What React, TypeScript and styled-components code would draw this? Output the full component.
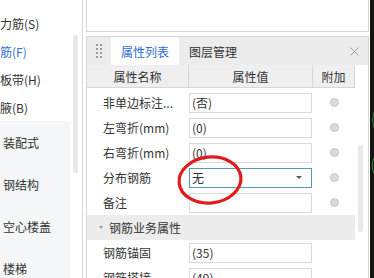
import styled, { createGlobalStyle } from "styled-components";

const Global = createGlobalStyle`
  html, body { margin: 0; padding: 0; background: #fff; }
  body {
    font-family: "Noto Sans CJK SC", "Noto Sans", sans-serif;
    font-size: 12px;
    color: #333;
  }
`;

const Screen = styled.div`
  position: relative;
  width: 374px;
  height: 278px;
  overflow: hidden;
  display: flex;
  background: #fff;
`;

/* ---- left menu ---- */
const LeftNav = styled.div`
  width: 82px;
  border-right: 1px solid #d8d8d8;
  display: flex;
  flex-shrink: 0;
`;

const NavList = styled.div`
  width: 70px;
  display: flex;
  flex-direction: column;
`;

const NavTop = styled.div`
  padding-top: 9px;
  display: flex;
  flex-direction: column;
  flex-shrink: 0;
`;

const NavItem = styled.div<{ $active?: boolean }>`
  height: 28px;
  flex-shrink: 0;
  display: flex;
  align-items: center;
  white-space: nowrap;
  color: ${(p) => (p.$active ? "#2e6fd2" : "#333")};
`;

const NavGroup = styled.div`
  flex: 1;
  background: #f5f6f8;
  display: flex;
  flex-direction: column;
`;

const GroupItem = styled.div`
  height: 42px;
  flex-shrink: 0;
  display: flex;
  align-items: center;
  padding-left: 3px;
  white-space: nowrap;
`;

const NavScroll = styled.div`
  flex: 1;
  display: flex;
  padding-left: 3px;
`;

const Thumb = styled.div<{ $top: number; $h: number }>`
  width: 5px;
  height: ${(p) => p.$h}px;
  margin-top: ${(p) => p.$top}px;
  border-radius: 3px;
  background: #e8e8e8;
`;

/* ---- right column ---- */
const Main = styled.div`
  width: 283px;
  margin-left: 3px;
  display: flex;
  flex-direction: column;
  flex-shrink: 0;
`;

const TopBox = styled.div`
  height: 32px;
  flex-shrink: 0;
  box-sizing: border-box;
  border: 1px solid #d6d6d6;
  border-top: none;
  margin-bottom: 4px;
`;

const Panel = styled.div`
  flex: 1;
  border: 1px solid #d6d6d6;
  border-bottom: none;
  display: flex;
  flex-direction: column;
  min-height: 0;
  overflow: hidden;
`;

const TabBar = styled.div`
  height: 28px;
  flex-shrink: 0;
  background: #ececec;
  display: flex;
  align-items: stretch;
`;

const Grip = styled.div`
  width: 24px;
  display: flex;
  align-items: center;
  justify-content: center;
`;

const Tab = styled.div<{ $active?: boolean }>`
  width: 68px;
  display: flex;
  align-items: center;
  justify-content: center;
  background: ${(p) => (p.$active ? "#fff" : "transparent")};
  color: ${(p) => (p.$active ? "#2e6fd2" : "#333")};
`;

const Close = styled.div`
  margin-left: auto;
  width: 28px;
  display: flex;
  align-items: center;
  justify-content: center;
`;

const Table = styled.div`
  flex: 1;
  display: flex;
  align-items: flex-start;
`;

const TableMain = styled.div`
  width: 268px;
  display: flex;
  flex-direction: column;
`;

const cols = "102px 124px 42px";

const HeadRow = styled.div`
  display: grid;
  grid-template-columns: ${cols};
  height: 22px;
  flex-shrink: 0;
  border-bottom: 1px solid #d6d6d6;
  background: #efefef;
`;

const HeadCell = styled.div`
  border-right: 1px solid #d6d6d6;
  display: flex;
  align-items: center;
  justify-content: center;
`;

const Body = styled.div`
  padding-top: 2px;
  display: flex;
  flex-direction: column;
`;

const Row = styled.div`
  display: grid;
  grid-template-columns: ${cols};
  height: 25px;
  flex-shrink: 0;
  align-items: center;
`;

const Label = styled.div`
  padding-left: 16px;
  white-space: nowrap;
`;

const Field = styled.div<{ $focus?: boolean }>`
  width: 123px;
  height: 20px;
  box-sizing: border-box;
  border: 1px solid ${(p) => (p.$focus ? "#4e9db2" : "#d9d9d9")};
  padding: 0 9px 0 2px;
  display: flex;
  align-items: center;
  justify-content: space-between;
  background: #fff;
`;

const Caret = styled.span`
  width: 0;
  height: 0;
  border-left: 3px solid transparent;
  border-right: 3px solid transparent;
  border-top: 3px solid #555;
`;

const Radio = styled.div`
  justify-self: center;
  width: 9px;
  height: 9px;
  box-sizing: border-box;
  border-radius: 50%;
  background: #dadada;
  border: 1px solid #c6c6c6;
  margin-left: 1px;
`;

const Section = styled.div`
  height: 25px;
  flex-shrink: 0;
  background: #ececec;
  display: flex;
  align-items: center;
  padding-left: 12px;
  gap: 6px;
`;

const SectionArrow = styled.span`
  width: 0;
  height: 0;
  border-left: 2.5px solid transparent;
  border-right: 2.5px solid transparent;
  border-top: 3px solid #999;
`;

const TableScroll = styled.div`
  flex: 1;
  display: flex;
  padding-left: 3px;
`;

const DarkStrip = styled.div`
  margin-left: 1px;
  flex: 1;
  background: #121512;
  display: flex;
  flex-direction: column;
`;

const Annotation = styled.svg`
  position: absolute;
  left: 172px;
  top: 150px;
  pointer-events: none;
`;

const props1 = [
  { label: "非单边标注...", value: "(否)" },
  { label: "左弯折(mm)", value: "(0)" },
  { label: "右弯折(mm)", value: "(0)" },
  { label: "分布钢筋", value: "无", select: true },
  { label: "备注", value: "" },
];

const props2 = [
  { label: "钢筋锚固", value: "(35)" },
  { label: "钢筋搭接", value: "(49)" },
];

export default function App() {
  return (
    <Screen>
      <Global />
      <LeftNav>
        <NavList>
          <NavTop>
            <NavItem>力筋(S)</NavItem>
            <NavItem $active>筋(F)</NavItem>
            <NavItem>板带(H)</NavItem>
            <NavItem>腋(B)</NavItem>
          </NavTop>
          <NavGroup>
            <GroupItem>装配式</GroupItem>
            <GroupItem>钢结构</GroupItem>
            <GroupItem>空心楼盖</GroupItem>
            <GroupItem>楼梯</GroupItem>
          </NavGroup>
        </NavList>
        <NavScroll>
          <Thumb $top={35} $h={138} />
        </NavScroll>
      </LeftNav>

      <Main>
        <TopBox />
        <Panel>
          <TabBar>
            <Grip>
              <svg width="6" height="14" viewBox="0 0 6 14">
                {[0, 1].map((c) =>
                  [0, 1, 2, 3].map((r) => (
                    <rect key={`${c}-${r}`} x={c * 4} y={r * 4} width="2" height="2" fill="#9a9a9a" />
                  ))
                )}
              </svg>
            </Grip>
            <Tab $active>属性列表</Tab>
            <Tab>图层管理</Tab>
            <Close>
              <svg width="9" height="9" viewBox="0 0 9 9">
                <path d="M0.5 0.5 L8.5 8.5 M8.5 0.5 L0.5 8.5" stroke="#9a9a9a" strokeWidth="1" />
              </svg>
            </Close>
          </TabBar>
          <Table>
            <TableMain>
              <HeadRow>
                <HeadCell>属性名称</HeadCell>
                <HeadCell>属性值</HeadCell>
                <HeadCell>附加</HeadCell>
              </HeadRow>
              <Body>
                {props1.map((p) => (
                  <Row key={p.label}>
                    <Label>{p.label}</Label>
                    <Field $focus={p.select}>
                      <span>{p.value}</span>
                      {p.select && <Caret />}
                    </Field>
                    <Radio />
                  </Row>
                ))}
                <Section>
                  <SectionArrow />
                  <span>钢筋业务属性</span>
                </Section>
                {props2.map((p) => (
                  <Row key={p.label}>
                    <Label>{p.label}</Label>
                    <Field>
                      <span>{p.value}</span>
                    </Field>
                    <div />
                  </Row>
                ))}
              </Body>
            </TableMain>
            <TableScroll>
              <Thumb $top={80} $h={87} />
            </TableScroll>
          </Table>
        </Panel>
      </Main>

      <DarkStrip>
        <svg width="4" height="278" viewBox="0 0 4 278">
          <path d="M4 112 Q1 120 4 128" stroke="#2f8a3a" strokeWidth="1" fill="none" />
          <path d="M4 158 Q0.5 166 4 174" stroke="#2f8a3a" strokeWidth="1" fill="none" />
        </svg>
      </DarkStrip>

      <Annotation width="80" height="60" viewBox="0 0 80 60">
        <ellipse
          cx="38"
          cy="30"
          rx="31"
          ry="23"
          fill="none"
          stroke="#e11b1b"
          strokeWidth="3.2"
          transform="rotate(-6 38 30)"
        />
      </Annotation>
    </Screen>
  );
}
